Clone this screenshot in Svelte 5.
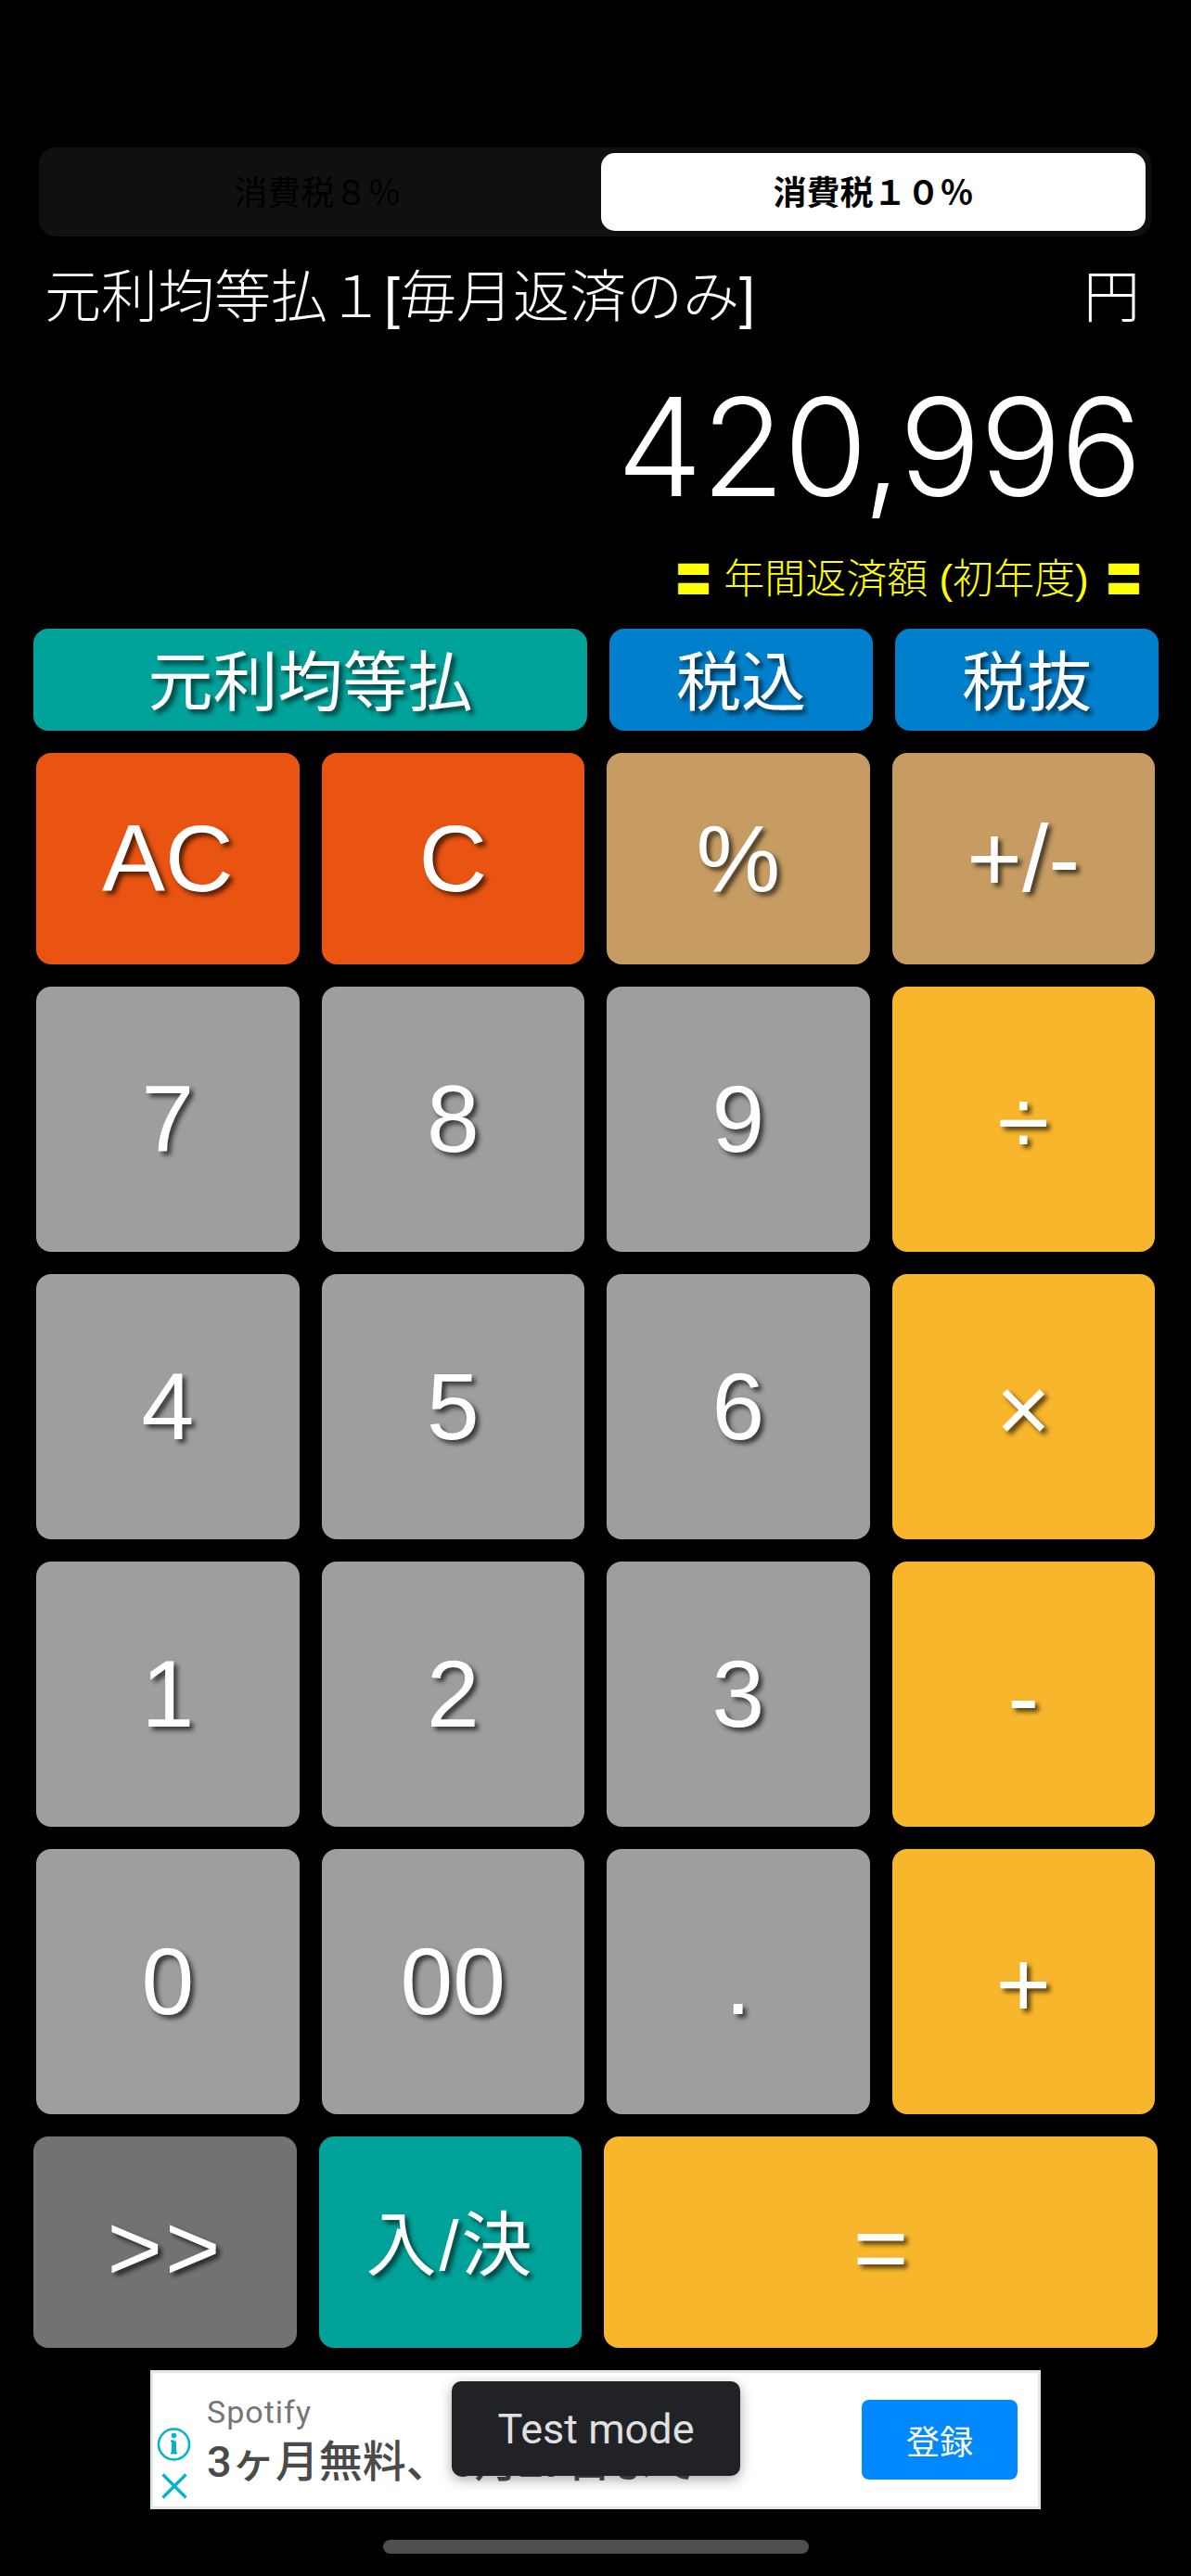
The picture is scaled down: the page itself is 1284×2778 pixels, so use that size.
<script>
  const keys = [
    { label: 'AC', kind: 'clear' },
    { label: 'C', kind: 'clear' },
    { label: '%', kind: 'tan' },
    { label: '+/-', kind: 'tan' },
    { label: '7', kind: 'num' },
    { label: '8', kind: 'num' },
    { label: '9', kind: 'num' },
    { label: '÷', kind: 'op' },
    { label: '4', kind: 'num' },
    { label: '5', kind: 'num' },
    { label: '6', kind: 'num' },
    { label: '×', kind: 'op' },
    { label: '1', kind: 'num' },
    { label: '2', kind: 'num' },
    { label: '3', kind: 'num' },
    { label: '-', kind: 'op' },
    { label: '0', kind: 'num' },
    { label: '00', kind: 'num' },
    { label: '.', kind: 'num' },
    { label: '+', kind: 'op' },
  ]
</script>

<div class="calc">
  <div class="segment">
    <div class="seg off">消費税８％</div>
    <div class="seg on">消費税１０％</div>
  </div>

  <div class="title-row">
    <span>元利均等払１[毎月返済のみ]</span>
    <span>円</span>
  </div>

  <div class="display">420,996</div>

  <div class="caption"><span class="geta">〓</span> 年間返済額 (初年度) <span class="geta last">〓</span></div>

  <div class="mode-row">
    <button class="key small teal">元利均等払</button>
    <button class="key small blue">税込</button>
    <button class="key small blue">税抜</button>
  </div>

  <div class="pad">
    {#each keys as k}
      <button class="key {k.kind}">{k.label}</button>
    {/each}
  </div>

  <div class="bottom-row">
    <button class="key dark">&gt;&gt;</button>
    <button class="key teal enter">入/決</button>
    <button class="key op equals">=</button>
  </div>

  <div class="ad">
    <div class="ad-icons">
      <svg width="37" height="36" viewBox="0 0 37 36" fill="none" stroke="#00b4d0" stroke-width="2.500">
        <circle cx="18.500" cy="18" r="16.500" />
        <path d="M18.500 14.500v13" stroke-width="5" />
        <path d="M15 14.500h4M15 27.500h7" stroke-width="2" />
        <circle cx="18.500" cy="8.500" r="2.800" fill="#00b4d0" stroke="none" />
      </svg>
      <svg width="28" height="28" viewBox="0 0 28 28" fill="none" stroke="#00b4d0" stroke-width="3.200">
        <path d="M1.500 1.500l25 25M26.500 1.500l-25 25" />
      </svg>
    </div>
    <div class="ad-copy">
      <div class="advertiser">Spotify</div>
      <div class="headline">3ヶ月無料、6月27日まで</div>
    </div>
    <div class="signup">登録</div>
    <div class="test-mode">Test mode</div>
  </div>

  <div class="home-bar"></div>
</div>

<style>
  :global(body) {
    background: #000;
  }

  .calc {
    width: 1284px;
    height: 2778px;
    background: #000;
    color: #fff;
    font-family: "Liberation Sans", "Noto Sans CJK JP", sans-serif;
    padding-top: 159px;
    box-sizing: border-box;
    overflow: hidden;
  }

  .segment {
    display: grid;
    grid-template-columns: 600px 587px;
    width: 1199px;
    height: 96px;
    margin-left: 42px;
    padding: 6px;
    box-sizing: border-box;
    background: #101010;
    border-radius: 18px;
  }
  .seg {
    display: flex;
    align-items: center;
    justify-content: center;
    padding-bottom: 5px;
    font-size: 36px;
    border-radius: 15px;
  }
  .seg.off { color: #000; padding-right: 11px; }
  .seg.on { background: #fff; color: #000; font-weight: 700; }

  .title-row {
    display: flex;
    justify-content: space-between;
    align-items: center;
    height: 104px;
    margin-top: 8px;
    padding: 0 55px 0 48px;
    font-size: 61px;
    font-weight: 300;
  }

  .display {
    height: 170px;
    margin-top: 30px;
    padding-right: 54px;
    text-align: right;
    font-family: Inter, "Liberation Sans", sans-serif;
    font-weight: 300;
    font-size: 147px;
    letter-spacing: -1.500px;
    line-height: 170px;
  }

  .caption {
    height: 50px;
    margin-top: 33px;
    padding-right: 52px;
    text-align: right;
    color: #ff0;
    font-size: 44px;
    line-height: 50px;
    font-weight: 300;
  }
  .geta { font-size: 41px; }
  .geta.last { margin-left: 5px; }

  .key {
    display: flex;
    align-items: center;
    justify-content: center;
    padding: 0;
    border: none;
    border-radius: 16px;
    color: #fff;
    font-family: inherit;
    font-size: 102px;
    text-shadow: 4px 4px 5px rgba(0, 0, 0, 0.65);
  }
  .key.small { font-size: 70px; padding-bottom: 6px; }
  .num { background: #9d9f9e; }
  .clear { background: #e95412; }
  .tan { background: #c69c62; }
  .op { background: #f8b62d; padding-top: 6px; }
  .teal { background: #00a29a; }
  .blue { background: #0080cc; }
  .dark { background: #727272; padding-top: 12px; letter-spacing: 3px; }
  .key.enter { font-size: 76px; letter-spacing: 3px; padding-bottom: 6px; }
  .key.equals { padding-top: 12px; }

  .mode-row {
    display: grid;
    grid-template-columns: 597px 284px 284px;
    gap: 24px;
    height: 110px;
    margin: 28px 0 0 36px;
  }

  .pad {
    display: grid;
    grid-template-columns: repeat(4, 1fr);
    grid-template-rows: 228px repeat(4, 286px);
    gap: 24px;
    width: 1206px;
    margin: 24px 0 0 39px;
  }

  .bottom-row {
    display: grid;
    grid-template-columns: 284px 283px 597px;
    gap: 24px;
    height: 228px;
    margin: 24px 0 0 36px;
  }

  .ad {
    position: relative;
    display: flex;
    align-items: center;
    width: 960px;
    height: 150px;
    margin: 24px 0 0 162px;
    box-sizing: border-box;
    background: #fff;
    border: 3px solid #e4e5e9;
    font-family: Roboto, "Noto Sans CJK JP", sans-serif;
  }
  .ad-icons {
    display: flex;
    flex-direction: column;
    align-items: center;
    gap: 13px;
    width: 45px;
    margin-top: 50px;
  }
  .ad-icons svg { display: block; }
  .ad-copy {
    flex: 1;
    padding-left: 13px;
  }
  .advertiser {
    padding-top: 2px;
    color: #757575;
    font-size: 34px;
    letter-spacing: 1px;
    line-height: 40px;
  }
  .headline {
    margin-top: 5px;
    color: #4a4a4a;
    font-size: 47px;
    font-weight: 500;
    line-height: 58px;
    white-space: nowrap;
  }
  .signup {
    display: flex;
    align-items: center;
    justify-content: center;
    width: 168px;
    height: 86px;
    margin-right: 22px;
    background: #0088ff;
    border-radius: 8px;
    color: #fff;
    font-size: 36px;
  }
  .test-mode {
    position: absolute;
    left: 322px;
    top: 9px;
    display: flex;
    align-items: center;
    justify-content: center;
    width: 311px;
    height: 102px;
    background: #212226;
    border-radius: 10px;
    box-shadow: 0 4px 14px rgba(0, 0, 0, 0.35);
    color: #e0e0e0;
    font-size: 45px;
  }

  .home-bar {
    width: 459px;
    height: 15px;
    margin: 33px 0 0 413px;
    background: #4f4f4f;
    border-radius: 8px;
  }
</style>
